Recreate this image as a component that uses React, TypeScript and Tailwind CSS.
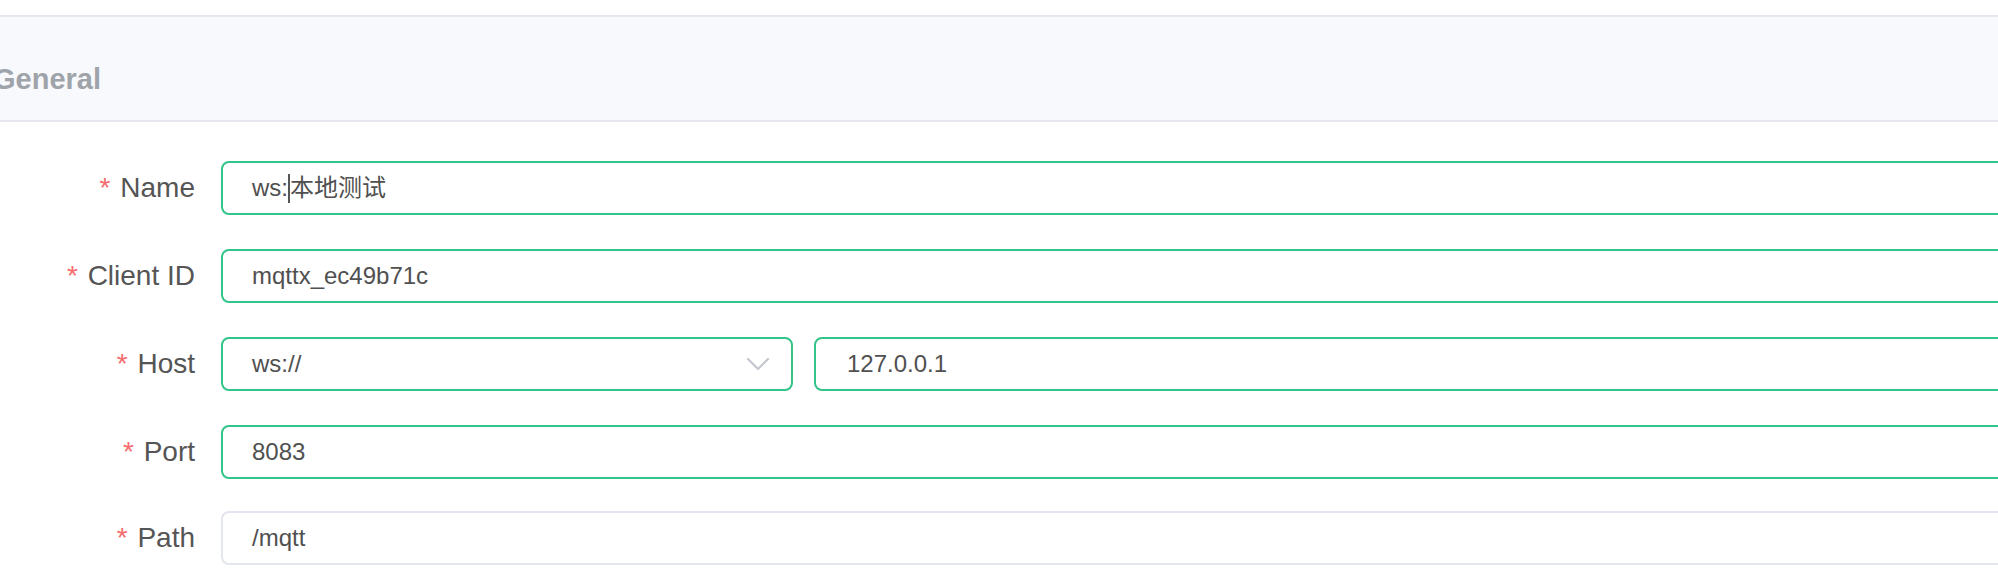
import React from "react";

const labelFont = { fontFamily: '"Liberation Sans", "Noto Sans CJK SC", Arial, sans-serif' };

function Label({ text }: { text: string }) {
  return (
    <div className="w-[195px] shrink-0 text-right text-[28px] leading-none text-[#555555]">
      <span className="text-[#f56c6c] mr-[2px]">*</span> {text}
    </div>
  );
}

function Field({ children, focused = true }: { children: React.ReactNode; focused?: boolean }) {
  return (
    <div
      className={`flex-1 h-[54px] rounded-[8px] border-2 bg-white flex items-center pl-[29px] text-[24px] text-[#505050] ${
        focused ? "border-[#34c388]" : "border-[#e4e6ef]"
      }`}
    >
      {children}
    </div>
  );
}

export default function App() {
  return (
    <div className="w-[1998px] h-[580px] overflow-hidden bg-white" style={labelFont}>
      <div className="mt-[15px] h-[107px] border-y-2 border-[#e6e7ee] bg-[#f8f9fc] pt-[48px]">
        <div className="-ml-[7px] text-[29px] leading-[29px] font-bold text-[#9fa3aa]">General</div>
      </div>

      <div className="w-[2200px] pt-[39px] flex flex-col">
        <div className="flex items-center gap-[26px]">
          <Label text="Name" />
          <Field>
            <span>ws:</span>
            <span className="inline-block w-[2px] h-[29px] bg-[#555555]" />
            <span>本地测试</span>
          </Field>
        </div>

        <div className="flex items-center gap-[26px] mt-[34px]">
          <Label text="Client ID" />
          <Field>mqttx_ec49b71c</Field>
        </div>

        <div className="flex items-center gap-[26px] mt-[34px]">
          <Label text="Host" />
          <div className="flex-1 flex gap-[21px]">
            <div className="w-[572px] shrink-0 h-[54px] rounded-[8px] border-2 border-[#34c388] bg-white flex items-center justify-between pl-[29px] pr-[21px] text-[24px] text-[#505050]">
              <span>ws://</span>
              <svg width="24" height="14" viewBox="0 0 24 14" fill="none">
                <polyline points="2,2 12,12 22,2" stroke="#c4c7cf" strokeWidth="2.2" strokeLinecap="round" strokeLinejoin="round" />
              </svg>
            </div>
            <Field>
              <span className="pl-[2px]">127.0.0.1</span>
            </Field>
          </div>
        </div>

        <div className="flex items-center gap-[26px] mt-[34px]">
          <Label text="Port" />
          <Field>8083</Field>
        </div>

        <div className="flex items-center gap-[26px] mt-[32px]">
          <Label text="Path" />
          <Field focused={false}>/mqtt</Field>
        </div>
      </div>
    </div>
  );
}
